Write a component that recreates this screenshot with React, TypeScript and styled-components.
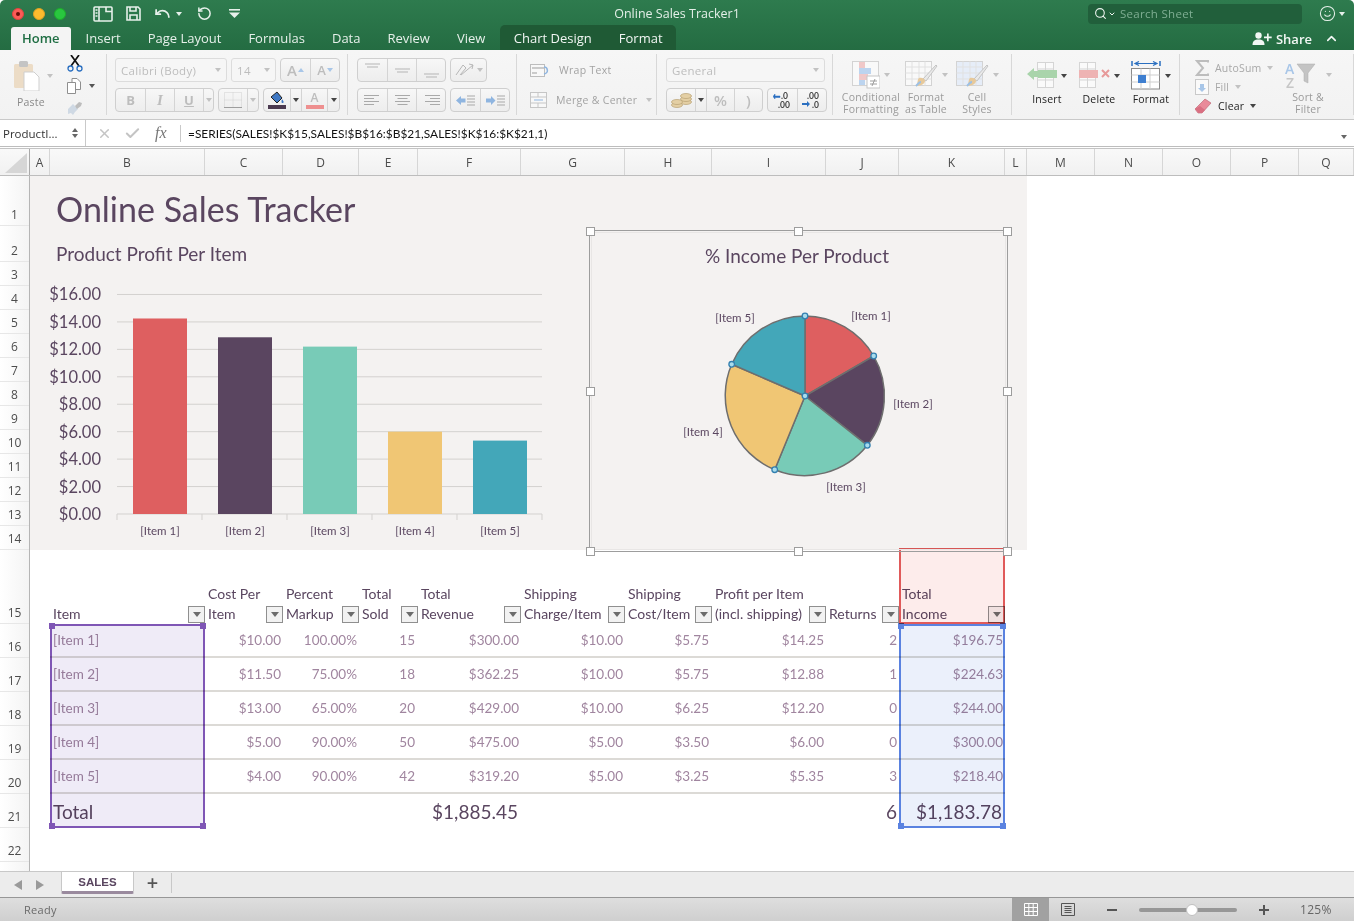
import React from 'react';
import styled, { createGlobalStyle } from 'styled-components';
import { Search, Smile, ChevronUp, X, Check, Undo, RotateCcw, ChevronDown } from 'lucide-react';

const UI_FONT = '"Open Sans", "Noto Sans", sans-serif';
const SHEET_FONT = 'Lato, "Open Sans", sans-serif';
const INK = '#5a4660';
const MUTED = '#a0859f';
const COLUMNS = '20px 155px 78px 76px 59px 103px 104px 87px 114px 73px 106px';

const GlobalStyle = createGlobalStyle`
  html, body { margin: 0; padding: 0; background: #fff; }
  * { box-sizing: border-box; }
`;

const Shell = styled.div`
  width: 1354px;
  height: 921px;
  display: flex;
  flex-direction: column;
  overflow: hidden;
  font-family: ${UI_FONT};
  border-radius: 5px 5px 0 0;
`;

/* title bar + tabs */
const Header = styled.header`
  background: linear-gradient(#2e7b4e, #246c42);
  height: 50px;
  flex: none;
  color: #fff;
`;
const TitleRow = styled.div`
  height: 27px;
  display: grid;
  grid-template-columns: 1fr auto 1fr;
  align-items: center;
`;
const QuickAccess = styled.div`
  display: flex;
  align-items: center;
  padding-left: 12px;
`;
const Light = styled.span<{ $c: string; $edge: string }>`
  width: 12px;
  height: 12px;
  border-radius: 50%;
  background: ${(p) => p.$c};
  border: 1px solid ${(p) => p.$edge};
  margin-right: 9px;
  display: flex;
  align-items: center;
  justify-content: center;
`;
const LightDot = styled.span`
  width: 4px;
  height: 4px;
  border-radius: 50%;
  background: #6b0c08;
`;
const QuickSlot = styled.span<{ $w: number }>`
  width: ${(p) => p.$w}px;
  display: flex;
  align-items: center;
  gap: 5px;
  color: #e6f0ea;
`;
const DocTitle = styled.div`
  font-size: 12.5px;
  color: #e4efe8;
`;
const TitleRight = styled.div`
  display: flex;
  align-items: center;
  justify-content: flex-end;
  padding-right: 9px;
`;
const SearchBox = styled.div`
  width: 214px;
  height: 20px;
  background: #215f3b;
  border-radius: 4px;
  display: flex;
  align-items: center;
  gap: 1px;
  padding-left: 6px;
  font-size: 11.5px;
  letter-spacing: 0.3px;
  color: #7fae93;
  margin-right: 17px;
`;
const Face = styled.div`
  display: flex;
  align-items: center;
  gap: 3px;
  color: #e6f0ea;
`;
const TabRow = styled.nav`
  height: 23px;
  display: flex;
  align-items: flex-end;
  padding-left: 11px;
`;
const Tab = styled.div<{ $active?: boolean }>`
  height: 23px;
  line-height: 23px;
  font-size: 13px;
  padding: 0 ${(p) => (p.$active ? 11 : 13.5)}px;
  margin-right: ${(p) => (p.$active ? 1.5 : 0)}px;
  color: ${(p) => (p.$active ? '#1f6e43' : '#e6f0ea')};
  font-weight: ${(p) => (p.$active ? 600 : 400)};
  background: ${(p) => (p.$active ? '#f4f4f4' : 'transparent')};
  border-radius: ${(p) => (p.$active ? '3px 3px 0 0' : '0')};
`;
const ContextTabs = styled.div`
  display: flex;
  height: 25px;
  margin-left: 1.5px;
  padding-top: 2px;
  background: #1f5a35;
  border-radius: 5px 5px 0 0;
`;
const ContextTab = styled(Tab)`
  padding: 0 13.5px;
  color: #f1f6f3;
`;
const ShareArea = styled.div`
  margin-left: auto;
  display: flex;
  align-items: center;
  height: 23px;
  font-size: 13px;
  font-weight: 600;
  color: #f2f7f4;
  gap: 4px;
  padding-right: 15px;
`;

/* ribbon */
const Ribbon = styled.section`
  height: 70px;
  flex: none;
  display: flex;
  background: linear-gradient(#f6f6f6, #f2f2f2);
  border-bottom: 1px solid #c9c9c9;
  border-top: 0;
`;
const Group = styled.div<{ $w: number; $pl?: number }>`
  width: ${(p) => p.$w}px;
  flex: none;
  margin: 4px 0;
  padding: 4px 0 0 ${(p) => p.$pl ?? 9}px;
  border-right: 1px solid #d8d8d8;
  display: flex;
  position: relative;
`;
const Stack = styled.div<{ $gap?: number }>`
  display: flex;
  flex-direction: column;
  gap: ${(p) => p.$gap ?? 6}px;
`;
const ToolRow = styled.div<{ $gap?: number }>`
  display: flex;
  align-items: center;
  height: 24px;
  gap: ${(p) => p.$gap ?? 4}px;
`;
const Field = styled.div<{ $w: number }>`
  width: ${(p) => p.$w}px;
  height: 24px;
  border: 1px solid #dcdcdc;
  border-radius: 3px;
  background: #f6f6f6;
  display: flex;
  align-items: center;
  justify-content: space-between;
  padding: 0 5px;
  font-size: 11.5px;
  letter-spacing: 0.3px;
  color: #bdbdbd;
`;
const ToolGroup = styled.div`
  height: 24px;
  display: flex;
  border: 1px solid #cfcfcf;
  border-radius: 4px;
  background: linear-gradient(#f7f7f7, #ededed);
`;
const ToolBtn = styled.div<{ $w: number; $faint?: boolean }>`
  width: ${(p) => p.$w}px;
  display: flex;
  align-items: center;
  justify-content: center;
  gap: 1px;
  border-left: 1px solid #d4d4d4;
  color: ${(p) => (p.$faint ? '#bdbdbd' : '#444')};
  font-size: 13px;
  font-weight: 700;
  &:first-child { border-left: 0; }
`;
const ItalicGlyph = styled.span`
  font-family: "Liberation Serif", serif;
  font-style: italic;
  font-size: 15px;
`;
const UnderGlyph = styled.span`
  text-decoration: underline;
`;
const LargeA = styled.span<{ $size: number }>`
  font-size: ${(p) => p.$size}px;
  font-weight: 600;
`;
const Caret = styled.i<{ $c?: string }>`
  display: inline-block;
  flex: none;
  width: 0;
  height: 0;
  border-left: 3px solid transparent;
  border-right: 3px solid transparent;
  border-top: 4px solid ${(p) => p.$c ?? '#c2c2c2'};
`;
const PasteCol = styled.div`
  width: 40px;
  margin: 0 13px 0 14px;
  display: flex;
  flex-direction: column;
  align-items: flex-start;
`;
const PasteTop = styled.div`
  display: flex;
  align-items: center;
  gap: 7px;
  height: 35px;
`;
const GroupLabel = styled.div<{ $dark?: boolean }>`
  font-size: 10.5px;
  line-height: 12px;
  letter-spacing: 0.2px;
  text-align: center;
  color: ${(p) => (p.$dark ? '#222' : '#9b9b9b')};
`;
const PasteLabel = styled(GroupLabel)`
  margin: 3px 0 0 3px;
  color: #8a8a8a;
`;
const ClipTools = styled.div`
  display: flex;
  flex-direction: column;
  gap: 6px;
  margin-top: -3px;
`;
const ClipRow = styled.div`
  display: flex;
  align-items: center;
  gap: 8px;
`;
const TextTool = styled.div`
  display: flex;
  align-items: center;
  gap: 9px;
  height: 24px;
  font-size: 10.5px;
  letter-spacing: 0.3px;
  color: #a3a3a3;
`;
const BigTool = styled.div<{ $w: number }>`
  width: ${(p) => p.$w}px;
  flex: none;
  display: flex;
  flex-direction: column;
  align-items: center;
`;
const BigIcon = styled.div`
  height: 35px;
  display: flex;
  align-items: center;
  gap: 4px;
`;
const EditRow = styled.div<{ $dark?: boolean }>`
  display: flex;
  align-items: center;
  gap: 6px;
  font-size: 10.5px;
  letter-spacing: 0.2px;
  height: 23px;
  color: ${(p) => (p.$dark ? '#222' : '#a8a8a8')};
`;
const Swatch = styled.span<{ $c: string }>`
  width: 18px;
  height: 4px;
  background: ${(p) => p.$c};
  display: block;
`;
const SwatchIcon = styled.span`
  display: flex;
  flex-direction: column;
  align-items: center;
  gap: 1px;
`;

/* formula bar */
const FormulaBar = styled.div`
  height: 27px;
  flex: none;
  display: flex;
  align-items: center;
  background: #fff;
  border-bottom: 1px solid #bdbdbd;
  margin-top: 0;
`;
const NameBox = styled.div`
  width: 86px;
  height: 100%;
  border-right: 1px solid #c9c9c9;
  display: flex;
  align-items: center;
  justify-content: space-between;
  padding: 0 7px 0 3px;
  font-size: 11.5px;
  color: #333;
`;
const Stepper = styled.div`
  display: flex;
  flex-direction: column;
  gap: 2px;
`;
const StepUp = styled(Caret)`
  transform: rotate(180deg);
`;
const FormulaActions = styled.div`
  width: 95px;
  height: 17px;
  display: flex;
  align-items: center;
  padding-left: 11px;
  gap: 12px;
  border-right: 1px solid #c9c9c9;
  color: #c4c4c4;
`;
const FxGlyph = styled.span`
  font-family: "Liberation Serif", serif;
  font-style: italic;
  font-size: 16px;
  color: #777;
  margin-left: 2px;
`;
const FormulaText = styled.div`
  flex: 1;
  padding-left: 7px;
  font-family: ${SHEET_FONT};
  font-size: 11.9px;
  color: #111;
`;
const FormulaEnd = styled.div`
  padding-right: 7px;
`;

/* column headings */
const ColumnHeadings = styled.div`
  height: 28px;
  flex: none;
  margin-top: 1px;
  border-top: 1px solid #c4c4c4;
  border-bottom: 1px solid #bdbdbd;
  display: grid;
  grid-template-columns: 30px ${COLUMNS} 22px 68px 68px 68px 68px 55px;
  background: linear-gradient(#f9f9f9, #f1f1f1);
`;
const Corner = styled.div`
  border-right: 1px solid #a9a9a9;
  display: flex;
  align-items: flex-end;
  justify-content: flex-end;
  padding: 0 2px 2px 0;
`;
const ColumnHead = styled.div`
  border-right: 1px solid #d6d6d6;
  display: flex;
  align-items: center;
  justify-content: center;
  font-size: 12px;
  color: #4c4c4c;
`;

/* worksheet */
const Sheet = styled.main`
  flex: 1;
  min-height: 0;
  display: flex;
  overflow: hidden;
  background: #fff;
`;
const RowHeadings = styled.div`
  width: 30px;
  flex: none;
  border-right: 1px solid #b5b5b5;
  background: linear-gradient(90deg, #fff, #f4f4f4);
`;
const RowHead = styled.div<{ $h: number }>`
  height: ${(p) => p.$h}px;
  display: flex;
  align-items: flex-end;
  justify-content: center;
  padding-bottom: 2px;
  border-bottom: 1px solid #e7e7e7;
  font-size: 12px;
  line-height: 16px;
  color: #4c4c4c;
`;
const SheetBody = styled.div`
  flex: 1;
  min-width: 0;
`;
const Band = styled.div`
  position: relative;
  width: 997px;
  height: 374px;
  background: #f4f2f1;
  padding: 8px 0 0 26px;
`;
const BigTitle = styled.h1`
  margin: 0;
  font-family: ${SHEET_FONT};
  font-weight: 400;
  font-size: 34px;
  line-height: 50px;
  color: ${INK};
`;
const SubTitle = styled.h2`
  margin: 8px 0 0;
  font-family: ${SHEET_FONT};
  font-weight: 400;
  font-size: 19px;
  line-height: 24px;
  color: ${INK};
`;
const BarChart = styled.svg`
  display: block;
  margin: 12px 0 0 -26px;
  font-family: ${SHEET_FONT};
`;
const ChartObject = styled.div`
  position: absolute;
  left: 559px;
  top: 54px;
  width: 419px;
  height: 322px;
  border: 1px solid #9d9d9d;
  outline: 1px solid #e8e6e5;
  outline-offset: -3px;
  z-index: 3;
`;
const ChartHandle = styled.span<{ $x: number; $y: number }>`
  position: absolute;
  left: ${(p) => p.$x * 100}%;
  top: ${(p) => p.$y * 100}%;
  width: 9px;
  height: 9px;
  margin: -4.5px 0 0 -4.5px;
  background: #fff;
  border: 1px solid #9d9d9d;
`;
const PieChart = styled.svg`
  display: block;
  font-family: ${SHEET_FONT};
`;

const Table = styled.div`
  display: grid;
  width: 977px;
  grid-template-columns: ${COLUMNS};
  grid-template-rows: 74px repeat(7, 34px);
`;
const HeadCell = styled.div<{ $col: number; $pl?: number }>`
  grid-column: ${(p) => p.$col};
  grid-row: 1;
  display: flex;
  align-items: flex-end;
  justify-content: space-between;
  padding-left: ${(p) => p.$pl ?? 3}px;
  font-family: ${SHEET_FONT};
  font-size: 14px;
  line-height: 20px;
  color: ${INK};
  white-space: pre-line;
`;
const HeadText = styled.span`
  padding-bottom: 0;
`;
const FilterButton = styled.span`
  flex: none;
  width: 17px;
  height: 17px;
  margin-bottom: 1px;
  border: 1px solid #8f8f8f;
  background: #f2f2f2;
  display: flex;
  align-items: center;
  justify-content: center;
`;
const FilterCaret = styled.i`
  width: 0;
  height: 0;
  border-left: 4.5px solid transparent;
  border-right: 4.5px solid transparent;
  border-top: 5px solid #6c6c6c;
`;
const Cell = styled.div<{ $col: number; $row: number; $left?: boolean; $total?: boolean; $pad?: number }>`
  grid-column: ${(p) => p.$col};
  grid-row: ${(p) => p.$row};
  display: flex;
  align-items: center;
  justify-content: ${(p) => (p.$left ? 'flex-start' : 'flex-end')};
  padding: 0 ${(p) => p.$pad ?? 2}px 0 ${(p) => (p.$left ? 3 : 0)}px;
  font-family: ${SHEET_FONT};
  font-size: ${(p) => (p.$total ? 19 : 13.5)}px;
  color: ${(p) => (p.$total ? INK : MUTED)};
  border-bottom: ${(p) => (p.$total ? '0' : '2px solid #dcdad6')};
`;
const Range = styled.div<{ $col: number; $from: number; $to: number; $edge: string; $fill: string }>`
  grid-column: ${(p) => p.$col};
  grid-row: ${(p) => p.$from} / ${(p) => p.$to};
  position: relative;
  z-index: 1;
  border: 2px solid ${(p) => p.$edge};
  background: ${(p) => p.$fill};
  mix-blend-mode: multiply;
`;
const RangeMark = styled.span<{ $c: string; $x: 'left' | 'right'; $y: 'top' | 'bottom' }>`
  position: absolute;
  ${(p) => p.$x}: -3px;
  ${(p) => p.$y}: -3px;
  width: 6px;
  height: 6px;
  background: ${(p) => p.$c};
`;
const IncomeHead = styled(Range)`
  margin-top: -2px;
`;

/* sheet tabs + status bar */
const TabBar = styled.div`
  height: 26px;
  flex: none;
  display: flex;
  align-items: stretch;
  background: #ececec;
  border-top: 1px solid #c8c8c8;
`;
const TabNav = styled.div`
  width: 61px;
  display: flex;
  align-items: center;
  padding-left: 14px;
  gap: 14px;
`;
const NavArrow = styled.i<{ $flip?: boolean }>`
  width: 0;
  height: 0;
  border-top: 5px solid transparent;
  border-bottom: 5px solid transparent;
  border-${(p) => (p.$flip ? 'left' : 'right')}: 8px solid #9a9a9a;
`;
const SheetTab = styled.div`
  width: 73px;
  height: 22px;
  background: #fff;
  border-left: 1px solid #c8c8c8;
  border-right: 1px solid #c8c8c8;
  border-bottom: 3px solid #9a8a9e;
  border-radius: 0 0 2px 2px;
  display: flex;
  align-items: center;
  justify-content: center;
  font-family: "Liberation Sans", sans-serif;
  font-size: 11.5px;
  font-weight: 700;
  color: ${INK};
`;
const AddSheet = styled.div`
  width: 38px;
  height: 20px;
  margin-top: 1px;
  border-right: 1px solid #c8c8c8;
  display: flex;
  align-items: center;
  justify-content: center;
  color: #555;
  font-size: 20px;
  font-weight: 600;
  line-height: 20px;
`;
const StatusBar = styled.footer`
  height: 24px;
  flex: none;
  display: flex;
  align-items: center;
  padding-left: 24px;
  background: linear-gradient(#dedede, #cfcfcf);
  border-top: 1px solid #979797;
  font-size: 11px;
  letter-spacing: 0.3px;
  color: #6a6a6a;
`;
const ViewButtons = styled.div`
  margin-left: auto;
  display: flex;
  height: 100%;
`;
const ViewButton = styled.div<{ $on?: boolean }>`
  width: 37px;
  display: flex;
  align-items: center;
  justify-content: center;
  background: ${(p) => (p.$on ? '#a1a1a1' : 'transparent')};
`;
const ZoomArea = styled.div`
  width: 268px;
  display: flex;
  align-items: center;
  padding-left: 21px;
`;
const ZoomSign = styled.span`
  width: 10px;
  height: 2px;
  background: #555;
  position: relative;
  flex: none;
`;
const ZoomPlusBar = styled.span`
  position: absolute;
  left: 4px;
  top: -4px;
  width: 2px;
  height: 10px;
  background: #555;
`;
const ZoomTrack = styled.div`
  width: 98px;
  height: 4px;
  margin: 0 22px 0 22px;
  border-radius: 2px;
  background: #979797;
  position: relative;
`;
const ZoomThumb = styled.span`
  position: absolute;
  left: 47px;
  top: -4px;
  width: 12px;
  height: 12px;
  border-radius: 50%;
  background: #fff;
  border: 1px solid #c0c0c0;
`;
const ZoomValue = styled.span`
  margin-left: 31px;
  font-size: 12px;
  color: #666;
`;

const Ico = styled.svg`
  display: block;
  flex: none;
`;

const SidebarIcon = () => (
  <Ico width="20" height="16" viewBox="0 0 20 16" fill="none" stroke="#e6f0ea" strokeWidth="1.6">
    <rect x="1" y="1" width="18" height="14" rx="1" />
    <path d="M6 1v14M13 1v4.5h6M2.5 4h2M2.5 7h2M2.5 10h2" />
  </Ico>
);
const SaveIcon = () => (
  <Ico width="15" height="15" viewBox="0 0 15 15" fill="none" stroke="#e6f0ea" strokeWidth="1.6">
    <path d="M1 1h11l2 2v11H1z" />
    <path d="M4 1v4h6V1M4 14V9h7v5" />
  </Ico>
);
const CustomizeIcon = () => (
  <Ico width="11" height="9" viewBox="0 0 11 9" fill="#e6f0ea">
    <rect x="0" y="0" width="11" height="1.6" />
    <path d="M0 3.4h11L5.5 9z" />
  </Ico>
);
const ShareIcon = () => (
  <Ico width="20" height="13" viewBox="0 0 20 13" fill="#f2f7f4">
    <circle cx="6.5" cy="3.5" r="3.2" />
    <path d="M0.5 13c0-4 2-5.5 6-5.5s6 1.500 6 5.500z" />
    <path d="M15 1.500h1.700v3h3v1.700h-3v3H15v-3h-3V4.500h3z" />
  </Ico>
);
const PasteIcon = () => (
  <Ico width="26" height="31" viewBox="0 0 26 31">
    <rect x="0" y="4" width="19" height="24" rx="1.500" fill="#ecdcc6" />
    <rect x="5" y="1" width="9" height="6" rx="1.500" fill="#c4c4c4" />
    <path d="M10 12h10l5 5v14H10z" fill="#fff" stroke="#cfcfcf" />
  </Ico>
);
const CutIcon = () => (
  <Ico width="16" height="17" viewBox="0 0 16 17" fill="none">
    <path d="M4 0l8 11M12 0L4 11" stroke="#111" strokeWidth="1.700" />
    <circle cx="3.500" cy="13.500" r="2.500" stroke="#2a6fc0" strokeWidth="1.300" />
    <circle cx="12.500" cy="13.500" r="2.500" stroke="#2a6fc0" strokeWidth="1.300" />
  </Ico>
);
const CopyIcon = () => (
  <Ico width="14" height="16" viewBox="0 0 14 16" fill="#fff" stroke="#8f8f8f">
    <path d="M5 .5h5l3.500 3.500v7.500H5z" />
    <path d="M.5 4.500h8v11h-8z" />
  </Ico>
);
const BrushIcon = () => (
  <Ico width="16" height="15" viewBox="0 0 16 15">
    <path d="M1 9l5-5 5 5-3 3-2 3-2-2-3 1z" fill="#cfd9e4" />
    <path d="M8 6l4-4 3 1-1 3-4 3z" fill="#bdbdbd" />
  </Ico>
);
const BorderIcon = () => (
  <Ico width="18" height="16" viewBox="0 0 18 16" fill="none" stroke="#d0d0d0" strokeDasharray="1 1">
    <path d="M.5.500h17v15H.5zM9 .500v15M.5 8h17" />
    <path d="M0 15.500h18" stroke="#9d9d9d" strokeDasharray="none" />
  </Ico>
);
const BucketIcon = () => (
  <Ico width="16" height="13" viewBox="0 0 16 13">
    <path d="M2 6l6-5 5 6-5 5z" fill="#3f78c4" stroke="#222" />
    <path d="M13 8c1 1.500 2 2.500 1.500 3.500s-2 .5-2-.5.200-2 .5-3z" fill="#3f78c4" />
  </Ico>
);
const BarsIcon = ({ widths, align }: { widths: number[]; align: 'l' | 'c' | 'r' }) => (
  <Ico width="17" height="12" viewBox="0 0 17 12" stroke="#a9a9a9">
    {widths.map((w, i) => {
      const x = align === 'l' ? 0 : align === 'r' ? 17 - w : (17 - w) / 2;
      return <path key={i} d={`M${x} ${1.500 + i * 3}h${w}`} />;
    })}
  </Ico>
);
const VAlignIcon = ({ y }: { y: number }) => (
  <Ico width="17" height="16" viewBox="0 0 17 16" stroke="#b5b5b5">
    <path d={`M1 ${y}h15M3 ${y + 3}h11`} />
  </Ico>
);
const OrientIcon = () => (
  <Ico width="22" height="16" viewBox="0 0 22 16" fill="none" stroke="#b7b7b7">
    <path d="M2 13L9 3l3 3-6 7M7 13l12-10M15 2l4 1-1 4" />
  </Ico>
);
const IndentIcon = ({ flip }: { flip?: boolean }) => (
  <Ico width="19" height="11" viewBox="0 0 19 11">
    <path d={flip ? 'M0 3.500h5V1l4.500 4.500L5 10V7.500H0z' : 'M0 5.500L5 1v2.500h4.500v4H5V10z'} fill="#8fb5e0" />
    <path d="M11 1h8M11 4h8M11 7h8M11 10h8" stroke="#a9a9a9" />
  </Ico>
);
const WrapIcon = () => (
  <Ico width="20" height="13" viewBox="0 0 20 13" fill="none">
    <rect x=".5" y=".5" width="14" height="12" fill="#f8f8f8" stroke="#bdbdbd" />
    <path d="M2 4h12M2 9h5" stroke="#9d9d9d" />
    <path d="M14 3c4 0 5 6 0 7" stroke="#8fb5e0" strokeWidth="1.500" />
  </Ico>
);
const MergeIcon = () => (
  <Ico width="17" height="16" viewBox="0 0 17 16" fill="none" stroke="#c6c6c6">
    <rect x=".5" y=".5" width="16" height="15" fill="#f8f8f8" />
    <path d="M.5 5h16M.5 11h16M8 .5V5M8 11v4.500" />
    <path d="M4 8h9" stroke="#8fb5e0" />
  </Ico>
);
const CoinsIcon = () => (
  <Ico width="21" height="15" viewBox="0 0 21 15" fill="#e4cfa4" stroke="#b9a274" strokeWidth=".7">
    <ellipse cx="15" cy="9" rx="5.500" ry="2.500" />
    <ellipse cx="15" cy="6" rx="5.500" ry="2.500" />
    <ellipse cx="15" cy="3" rx="5.500" ry="2.500" />
    <ellipse cx="6" cy="12" rx="5.500" ry="2.500" />
    <ellipse cx="6" cy="9" rx="5.500" ry="2.500" />
  </Ico>
);
const DecimalIcon = ({ more }: { more?: boolean }) => (
  <Ico width="20" height="18" viewBox="0 0 20 18" fontFamily={SHEET_FONT} fontSize="8.500" fill="#444">
    {more ? (
      <>
        <text x="8" y="8">.0</text>
        <text x="5" y="16.500">.00</text>
        <path d="M7 5L2 5V3L0 5.500 2 8V6.500h5z" fill="#2a6fc0" stroke="#2a6fc0" strokeWidth=".5" />
      </>
    ) : (
      <>
        <text x="5" y="8">.00</text>
        <text x="10" y="16.500">.0</text>
        <path d="M0 12h5v-2l3 3-3 3v-2H0z" fill="#2a6fc0" />
      </>
    )}
  </Ico>
);
const CondFormatIcon = () => (
  <Ico width="28" height="28" viewBox="0 0 28 28">
    <rect x=".5" y=".5" width="26" height="24" fill="#f9f9f9" stroke="#d3d3d3" />
    <rect x="7" y="1" width="6" height="6" fill="#f0c8c8" />
    <rect x="7" y="7" width="12" height="6" fill="#bcd4ef" />
    <rect x="7" y="13" width="9" height="6" fill="#f0c8c8" />
    <rect x="7" y="19" width="6" height="5" fill="#bcd4ef" />
    <rect x="15" y="15" width="13" height="12" fill="#fff" stroke="#c6c6c6" />
    <path d="M18 20h7M18 23h7M23 18l-3 7" stroke="#9d9d9d" />
  </Ico>
);
const TableStyleIcon = ({ wash }: { wash: string }) => (
  <Ico width="33" height="28" viewBox="0 0 33 28">
    <rect x=".5" y=".5" width="26" height="24" fill={wash} stroke="#d3d3d3" />
    <path d="M.5 6h26M.5 12h26M.5 18h26M7 .5v24M14 .5v24M20 .5v24" stroke="#e1e1e1" />
    <path d="M18 18L31 4l1 1-11 15z" fill="#e9e9e9" stroke="#c4c4c4" />
    <path d="M14 17c3-1 6 1 6 3 0 3-5 5-9 5 2-2 1-6 3-8z" fill="#e7c99b" />
    <path d="M11 25c1-1 3-4 5-4" stroke="#9cc0e6" strokeWidth="2" fill="none" />
  </Ico>
);
const InsertIcon = ({ bar, arrow }: { bar: string; arrow?: string }) => (
  <Ico width="30" height="27" viewBox="0 0 30 27">
    <rect x="10.500" y=".5" width="16" height="25" fill="#fafafa" stroke="#d5d5d5" />
    <path d="M10.500 7h16M10.500 18h16M18.500 .5v25" stroke="#d5d5d5" />
    <rect x="11" y="8" width="19" height="8" fill={bar} />
    <path d="M0 12l7-6v3h4v6H7v3z" fill={arrow} />
  </Ico>
);
const DeleteIcon = () => (
  <Ico width="31" height="27" viewBox="0 0 31 27">
    <rect x=".5" y=".5" width="16" height="25" fill="#fafafa" stroke="#d5d5d5" />
    <path d="M.5 7h16M.5 18h16M8.500 .5v25" stroke="#d5d5d5" />
    <rect x="0" y="8" width="19" height="8" fill="#eeb3b3" />
    <path d="M23 8l7 7M30 8l-7 7" stroke="#e79a9a" strokeWidth="2" />
  </Ico>
);
const FormatIcon = () => (
  <Ico width="30" height="29" viewBox="0 0 30 29">
    <path d="M1 0v5M29 0v5" stroke="#2a6fc0" strokeWidth="1.500" />
    <path d="M5 2.500h20M8 .5L4 2.500l4 2M22 .5l4 2-4 2" stroke="#2a6fc0" fill="none" strokeWidth="1.200" />
    <rect x=".5" y="7.500" width="28" height="20.500" fill="#fff" stroke="#8a8a8a" />
    <path d="M.5 14h28M.5 21h28M10 7.500V28M19 7.500V28" stroke="#cfcfcf" />
    <rect x="7" y="14" width="8" height="8" fill="#3f7fd0" />
  </Ico>
);
const SigmaIcon = () => (
  <Ico width="14" height="16" viewBox="0 0 14 16" fill="none" stroke="#bdbdbd" strokeWidth="2">
    <path d="M13 2.500V1H2l6 7-6 7h11v-1.500" />
  </Ico>
);
const FillIcon = () => (
  <Ico width="14" height="16" viewBox="0 0 14 16">
    <rect x=".5" y=".5" width="13" height="15" fill="#fafafa" stroke="#c9c9c9" />
    <path d="M5 5h4v4h2l-4 4-4-4h2z" fill="#a8c6e8" />
  </Ico>
);
const EraserIcon = () => (
  <Ico width="17" height="16" viewBox="0 0 17 16">
    <path d="M0 11L10 1l6 4L7 15H3z" fill="#e98a99" stroke="#b95d6c" strokeWidth=".6" />
    <path d="M0 11l4 4h3l3-3-5-4z" fill="#d96f81" />
  </Ico>
);
const SortIcon = () => (
  <Ico width="37" height="28" viewBox="0 0 37 28" fontFamily={UI_FONT} fontSize="14" fontWeight="600">
    <text x="0" y="13" fill="#a8c6e8">A</text>
    <text x="1" y="27" fill="#c6c6c6">Z</text>
    <path d="M12 3h18l-7 9v10l-4-2v-8z" fill="#c4c4c4" stroke="#adadad" strokeWidth=".5" />
  </Ico>
);
const GridIcon = ({ color }: { color: string }) => (
  <Ico width="14" height="13" viewBox="0 0 14 13" fill="none" stroke={color}>
    <path d="M.5.500h13v12H.5zM.5 4.500h13M.5 8.500h13M4.800 .5v12M9.200 .5v12" />
  </Ico>
);
const PageIcon = () => (
  <Ico width="14" height="13" viewBox="0 0 14 13" fill="none" stroke="#555">
    <path d="M.5.500h13v12H.5zM3.500 3.500h7M3.500 5.500h7M3.500 7.500h7M3.500 9.500h7" />
  </Ico>
);

const ROW_HEIGHTS = [50, 36, 24, 24, 24, 24, 24, 24, 24, 24, 24, 24, 24, 24, 74, 34, 34, 34, 34, 34, 34, 34, 34];
const HEADINGS = ['A', 'B', 'C', 'D', 'E', 'F', 'G', 'H', 'I', 'J', 'K', 'L', 'M', 'N', 'O', 'P', 'Q'];

const TABLE_HEADS: { col: number; text: string }[] = [
  { col: 2, text: 'Item' },
  { col: 3, text: 'Cost Per\nItem' },
  { col: 4, text: 'Percent\nMarkup' },
  { col: 5, text: 'Total\nSold' },
  { col: 6, text: 'Total\nRevenue' },
  { col: 7, text: 'Shipping\nCharge/Item' },
  { col: 8, text: 'Shipping\nCost/Item' },
  { col: 9, text: 'Profit per Item\n(incl. shipping)' },
  { col: 10, text: 'Returns' },
  { col: 11, text: 'Total\nIncome' },
];

const TABLE_ROWS = [
  ['[Item 1]', '$10.00', '100.00%', '15', '$300.00', '$10.00', '$5.75', '$14.25', '2', '$196.75'],
  ['[Item 2]', '$11.50', '75.00%', '18', '$362.25', '$10.00', '$5.75', '$12.88', '1', '$224.63'],
  ['[Item 3]', '$13.00', '65.00%', '20', '$429.00', '$10.00', '$6.25', '$12.20', '0', '$244.00'],
  ['[Item 4]', '$5.00', '90.00%', '50', '$475.00', '$5.00', '$3.50', '$6.00', '0', '$300.00'],
  ['[Item 5]', '$4.00', '90.00%', '42', '$319.20', '$5.00', '$3.25', '$5.35', '3', '$218.40'],
];

const BARS = [
  { x: 133, value: 14.25, color: '#de5f60', label: '[Item 1]' },
  { x: 218, value: 12.88, color: '#5a4560', label: '[Item 2]' },
  { x: 303, value: 12.2, color: '#78cbb7', label: '[Item 3]' },
  { x: 388, value: 6, color: '#f0c674', label: '[Item 4]' },
  { x: 473, value: 5.35, color: '#43a7b9', label: '[Item 5]' },
];
const AXIS = [16, 14, 12, 10, 8, 6, 4, 2, 0];
const UNIT = 13.72;
const BASE = 516;

const PIE_CENTER = [805, 398];
const PIE_RIM = [[805, 318], [873.7, 358], [867.3, 447.3], [774.7, 471.7], [731.7, 366.3]];
const PIE_COLORS = ['#de5f60', '#5a4560', '#78cbb7', '#f0c674', '#43a7b9'];
const PIE_LABELS = [
  { x: 871, y: 322, text: '[Item 1]' },
  { x: 913, y: 410, text: '[Item 2]' },
  { x: 846, y: 493, text: '[Item 3]' },
  { x: 703, y: 438, text: '[Item 4]' },
  { x: 735, y: 324, text: '[Item 5]' },
];
const CHART_HANDLES = [[0, 0], [0.5, 0], [1, 0], [0, 0.5], [1, 0.5], [0, 1], [0.5, 1], [1, 1]];

const Corners = ({ c }: { c: string }) => (
  <>
    <RangeMark $c={c} $x="left" $y="top" />
    <RangeMark $c={c} $x="right" $y="top" />
    <RangeMark $c={c} $x="left" $y="bottom" />
    <RangeMark $c={c} $x="right" $y="bottom" />
  </>
);

const App: React.FC = () => {
  const cellPad = (col: number) => (col === 5 || col === 8 ? 3 : 2);

  return (
    <Shell>
      <GlobalStyle />
      <Header>
        <TitleRow>
          <QuickAccess>
            <Light $c="#fc5b57" $edge="#e0443e"><LightDot /></Light>
            <Light $c="#fdbb2e" $edge="#dea123" />
            <Light $c="#29c73f" $edge="#1dad2b" />
            <QuickSlot $w={29} style={{ marginLeft: 18 }}><SidebarIcon /></QuickSlot>
            <QuickSlot $w={28} style={{ marginLeft: 4 }}><SaveIcon /></QuickSlot>
            <QuickSlot $w={43}><Undo size={17} strokeWidth={2.4} /><Caret $c="#e6f0ea" /></QuickSlot>
            <QuickSlot $w={32}><RotateCcw size={15} strokeWidth={2.4} /></QuickSlot>
            <QuickSlot $w={11}><CustomizeIcon /></QuickSlot>
          </QuickAccess>
          <DocTitle>Online Sales Tracker1</DocTitle>
          <TitleRight>
            <SearchBox>
              <Search size={13} color="#f0f6f2" />
              <ChevronDown size={8} color="#f0f6f2" strokeWidth={3} />
              <span style={{ marginLeft: 3 }}>Search Sheet</span>
            </SearchBox>
            <Face><Smile size={17} strokeWidth={1.5} /><Caret $c="#e6f0ea" /></Face>
          </TitleRight>
        </TitleRow>
        <TabRow>
          <Tab $active>Home</Tab>
          <Tab>Insert</Tab>
          <Tab>Page Layout</Tab>
          <Tab>Formulas</Tab>
          <Tab>Data</Tab>
          <Tab>Review</Tab>
          <Tab>View</Tab>
          <ContextTabs>
            <ContextTab>Chart Design</ContextTab>
            <ContextTab>Format</ContextTab>
          </ContextTabs>
          <ShareArea>
            <ShareIcon />
            <span style={{ marginRight: 8 }}>Share</span>
            <ChevronUp size={15} strokeWidth={2.6} />
          </ShareArea>
        </TabRow>
      </Header>

      <Ribbon>
        <Group $w={107} $pl={0}>
          <PasteCol>
            <PasteTop><PasteIcon /><Caret /></PasteTop>
            <PasteLabel>Paste</PasteLabel>
          </PasteCol>
          <ClipTools>
            <CutIcon />
            <ClipRow><CopyIcon /><Caret $c="#555" /></ClipRow>
            <BrushIcon />
          </ClipTools>
        </Group>

        <Group $w={241} $pl={8}>
          <Stack>
            <ToolRow>
              <Field $w={112}>Calibri (Body)<Caret /></Field>
              <Field $w={45}>14<Caret /></Field>
              <ToolGroup>
                <ToolBtn $w={29} $faint><LargeA $size={15}>A</LargeA><Caret $c="#a8c6e8" style={{ transform: 'rotate(180deg)' }} /></ToolBtn>
                <ToolBtn $w={29} $faint><LargeA $size={13}>A</LargeA><Caret $c="#a8c6e8" /></ToolBtn>
              </ToolGroup>
            </ToolRow>
            <ToolRow>
              <ToolGroup>
                <ToolBtn $w={29} $faint>B</ToolBtn>
                <ToolBtn $w={29} $faint><ItalicGlyph>I</ItalicGlyph></ToolBtn>
                <ToolBtn $w={29} $faint><UnderGlyph>U</UnderGlyph></ToolBtn>
                <ToolBtn $w={10} $faint><Caret /></ToolBtn>
              </ToolGroup>
              <ToolGroup>
                <ToolBtn $w={28}><BorderIcon /></ToolBtn>
                <ToolBtn $w={11}><Caret /></ToolBtn>
              </ToolGroup>
              <ToolGroup>
                <ToolBtn $w={26}><SwatchIcon><BucketIcon /><Swatch $c="#4b3a50" /></SwatchIcon></ToolBtn>
                <ToolBtn $w={11}><Caret $c="#444" /></ToolBtn>
                <ToolBtn $w={26} $faint><SwatchIcon><LargeA $size={12} style={{ lineHeight: '13px' }}>A</LargeA><Swatch $c="#ee8f8f" /></SwatchIcon></ToolBtn>
                <ToolBtn $w={12}><Caret $c="#444" /></ToolBtn>
              </ToolGroup>
            </ToolRow>
          </Stack>
        </Group>

        <Group $w={169} $pl={9}>
          <Stack>
            <ToolRow>
              <ToolGroup>
                <ToolBtn $w={29}><VAlignIcon y={2} /></ToolBtn>
                <ToolBtn $w={29}><VAlignIcon y={7} /></ToolBtn>
                <ToolBtn $w={29}><VAlignIcon y={12} /></ToolBtn>
              </ToolGroup>
              <ToolGroup>
                <ToolBtn $w={35}><OrientIcon /><Caret /></ToolBtn>
              </ToolGroup>
            </ToolRow>
            <ToolRow>
              <ToolGroup>
                <ToolBtn $w={29}><BarsIcon widths={[15, 10, 15, 10]} align="l" /></ToolBtn>
                <ToolBtn $w={29}><BarsIcon widths={[15, 10, 15, 10]} align="c" /></ToolBtn>
                <ToolBtn $w={29}><BarsIcon widths={[15, 10, 15, 10]} align="r" /></ToolBtn>
              </ToolGroup>
              <ToolGroup>
                <ToolBtn $w={29}><IndentIcon /></ToolBtn>
                <ToolBtn $w={29}><IndentIcon flip /></ToolBtn>
              </ToolGroup>
            </ToolRow>
          </Stack>
        </Group>

        <Group $w={140} $pl={13}>
          <Stack>
            <TextTool><WrapIcon />Wrap Text</TextTool>
            <TextTool><MergeIcon />Merge &amp; Center<Caret /></TextTool>
          </Stack>
        </Group>

        <Group $w={176} $pl={9}>
          <Stack>
            <ToolRow>
              <Field $w={159}>General<Caret /></Field>
            </ToolRow>
            <ToolRow>
              <ToolGroup>
                <ToolBtn $w={28}><CoinsIcon /></ToolBtn>
                <ToolBtn $w={11}><Caret $c="#444" /></ToolBtn>
                <ToolBtn $w={28} $faint><LargeA $size={15}>%</LargeA></ToolBtn>
                <ToolBtn $w={28} $faint><LargeA $size={15}>)</LargeA></ToolBtn>
              </ToolGroup>
              <ToolGroup>
                <ToolBtn $w={29}><DecimalIcon more /></ToolBtn>
                <ToolBtn $w={29}><DecimalIcon /></ToolBtn>
              </ToolGroup>
            </ToolRow>
          </Stack>
        </Group>

        <Group $w={179} $pl={7}>
          <BigTool $w={62}>
            <BigIcon><CondFormatIcon /><Caret /></BigIcon>
            <GroupLabel>Conditional<br />Formatting</GroupLabel>
          </BigTool>
          <BigTool $w={48}>
            <BigIcon><TableStyleIcon wash="#f9f9f9" /><Caret /></BigIcon>
            <GroupLabel>Format<br />as Table</GroupLabel>
          </BigTool>
          <BigTool $w={54}>
            <BigIcon><TableStyleIcon wash="#e6edf8" /><Caret /></BigIcon>
            <GroupLabel>Cell<br />Styles</GroupLabel>
          </BigTool>
        </Group>

        <Group $w={168} $pl={9}>
          <BigTool $w={52}>
            <BigIcon><InsertIcon bar="#a9d4ab" arrow="#a9d4ab" /><Caret $c="#444" /></BigIcon>
            <GroupLabel $dark>Insert</GroupLabel>
          </BigTool>
          <BigTool $w={52}>
            <BigIcon><DeleteIcon /><Caret $c="#444" /></BigIcon>
            <GroupLabel $dark>Delete</GroupLabel>
          </BigTool>
          <BigTool $w={52}>
            <BigIcon><FormatIcon /><Caret $c="#444" /></BigIcon>
            <GroupLabel $dark>Format</GroupLabel>
          </BigTool>
        </Group>

        <Group $w={174} $pl={15}>
          <Stack $gap={0} style={{ width: 92 }}>
            <EditRow><SigmaIcon />AutoSum<Caret /></EditRow>
            <EditRow><FillIcon />Fill<Caret /></EditRow>
            <EditRow $dark><EraserIcon />Clear<Caret $c="#444" /></EditRow>
          </Stack>
          <BigTool $w={42}>
            <BigIcon><SortIcon /><Caret /></BigIcon>
            <GroupLabel>Sort &amp;<br />Filter</GroupLabel>
          </BigTool>
        </Group>
      </Ribbon>

      <FormulaBar>
        <NameBox>
          ProductI...
          <Stepper><StepUp $c="#666" /><Caret $c="#666" /></Stepper>
        </NameBox>
        <FormulaActions>
          <X size={15} strokeWidth={2.4} />
          <Check size={17} strokeWidth={2.8} />
          <FxGlyph>fx</FxGlyph>
        </FormulaActions>
        <FormulaText>=SERIES(SALES!$K$15,SALES!$B$16:$B$21,SALES!$K$16:$K$21,1)</FormulaText>
        <FormulaEnd><Caret $c="#666" /></FormulaEnd>
      </FormulaBar>

      <ColumnHeadings>
        <Corner>
          <Ico width="22" height="20" viewBox="0 0 22 20"><path d="M22 0v20H0z" fill="#d6d6d6" /></Ico>
        </Corner>
        {HEADINGS.map((h) => <ColumnHead key={h}>{h}</ColumnHead>)}
      </ColumnHeadings>

      <Sheet>
        <RowHeadings>
          {ROW_HEIGHTS.map((h, i) => <RowHead key={i} $h={h}>{i + 1}</RowHead>)}
        </RowHeadings>
        <SheetBody>
          <Band>
            <BigTitle>Online Sales Tracker</BigTitle>
            <SubTitle>Product Profit Per Item</SubTitle>
            <BarChart width="530" height="270" viewBox="30 280 530 270">
              {AXIS.map((v) => {
                const y = BASE - v * UNIT;
                return (
                  <g key={v}>
                    <path d={`M117 ${y}H542`} stroke="#d3d1cf" />
                    <text x="101" y={y + 6} textAnchor="end" fontSize="16.500" fill={INK}>${v.toFixed(2)}</text>
                  </g>
                );
              })}
              {[117, 202, 287, 372, 457, 542].map((x) => (
                <path key={x} d={`M${x} ${BASE}v6`} stroke="#d3d1cf" />
              ))}
              {BARS.map((b) => (
                <g key={b.label}>
                  <rect x={b.x} y={BASE - b.value * UNIT} width="54" height={b.value * UNIT} fill={b.color} />
                  <text x={b.x + 27} y="537" textAnchor="middle" fontSize="11.500" fill={INK}>{b.label}</text>
                </g>
              ))}
            </BarChart>

            <ChartObject>
              <PieChart width="417" height="320" viewBox="590 233 417 320">
                <text x="797" y="265" textAnchor="middle" fontSize="19" fill={INK}>% Income Per Product</text>
                {PIE_RIM.map((p, i) => {
                  const next = PIE_RIM[(i + 1) % PIE_RIM.length];
                  return (
                    <path
                      key={i}
                      d={`M${PIE_CENTER[0]} ${PIE_CENTER[1]}L${p[0]} ${p[1]}A80 80 0 0 1 ${next[0]} ${next[1]}Z`}
                      fill={PIE_COLORS[i]}
                      stroke="#6e6e6e"
                      strokeWidth="1.500"
                    />
                  );
                })}
                {[PIE_CENTER, ...PIE_RIM].map((p, i) => (
                  <circle key={i} cx={p[0]} cy={p[1]} r="2.800" fill="#a9dcec" stroke="#3380b0" strokeWidth="1.300" />
                ))}
                {PIE_LABELS.map((l) => (
                  <text key={l.text} x={l.x} y={l.y} textAnchor="middle" fontSize="11.500" fill={INK}>{l.text}</text>
                ))}
              </PieChart>
              {CHART_HANDLES.map(([x, y]) => <ChartHandle key={`${x}-${y}`} $x={x} $y={y} />)}
            </ChartObject>
          </Band>

          <Table>
            {TABLE_HEADS.map((h) => (
              <HeadCell key={h.col} $col={h.col}>
                <HeadText>{h.text}</HeadText>
                <FilterButton><FilterCaret /></FilterButton>
              </HeadCell>
            ))}
            {TABLE_ROWS.map((row, r) =>
              row.map((value, c) => (
                <Cell key={`${r}-${c}`} $col={c + 2} $row={r + 2} $left={c === 0} $pad={cellPad(c + 2)}>{value}</Cell>
              ))
            )}
            <Cell $col={2} $row={7} $left $total>Total</Cell>
            <Cell $col={6} $row={7} $total $pad={3}>$1,885.45</Cell>
            <Cell $col={10} $row={7} $total>6</Cell>
            <Cell $col={11} $row={7} $total $pad={3}>$1,183.78</Cell>

            <Range $col={2} $from={2} $to={8} $edge="#7f56b5" $fill="#efebf7"><Corners c="#7f56b5" /></Range>
            <IncomeHead $col={11} $from={1} $to={2} $edge="#e05a5a" $fill="#fdeceb" />
            <Range $col={11} $from={2} $to={8} $edge="#5a82e0" $fill="#ebf0fb"><Corners c="#5a82e0" /></Range>
          </Table>
        </SheetBody>
      </Sheet>

      <TabBar>
        <TabNav><NavArrow /><NavArrow $flip /></TabNav>
        <SheetTab>SALES</SheetTab>
        <AddSheet>+</AddSheet>
      </TabBar>
      <StatusBar>
        Ready
        <ViewButtons>
          <ViewButton $on><GridIcon color="#fff" /></ViewButton>
          <ViewButton><PageIcon /></ViewButton>
        </ViewButtons>
        <ZoomArea>
          <ZoomSign />
          <ZoomTrack><ZoomThumb /></ZoomTrack>
          <ZoomSign><ZoomPlusBar /></ZoomSign>
          <ZoomValue>125%</ZoomValue>
        </ZoomArea>
      </StatusBar>
    </Shell>
  );
};

export default App;
